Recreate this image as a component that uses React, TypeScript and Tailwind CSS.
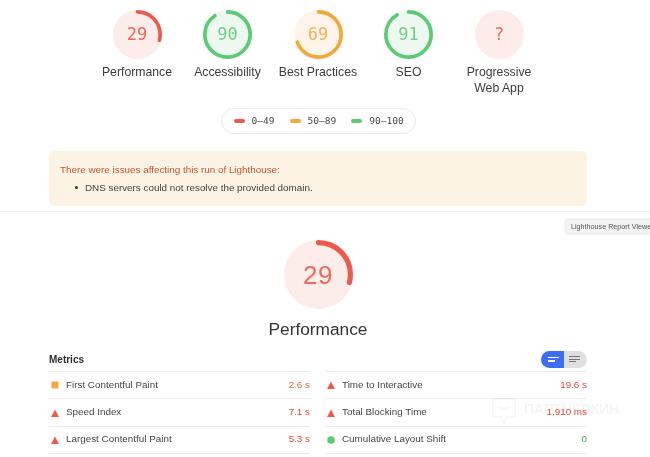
const SANS = "font-['Liberation_Sans',Arial,sans-serif]";
const MONO = "font-['DejaVu_Sans_Mono',monospace]";

type Tone = { stroke: string; bg: string; text: string };
const RED: Tone = { stroke: "#ec5a4c", bg: "#fcecea", text: "#ee6a5e" };
const GREEN: Tone = { stroke: "#5bcb74", bg: "#edf8f0", text: "#72d189" };
const ORANGE: Tone = { stroke: "#f4a83c", bg: "#fef4e9", text: "#f6b159" };

function Gauge({ value, tone, size, label }: { value: number | null; tone: Tone; size: number; label: string }) {
  const r = 55.5;
  const c = 2 * Math.PI * r;
  return (
    <div className="relative shrink-0" style={{ width: size, height: size }}>
      <svg viewBox="0 0 120 120" width={size} height={size} className="block -rotate-90">
        <circle cx="60" cy="60" r="60" fill={tone.bg} />
        {value !== null && (
          <circle
            cx="60"
            cy="60"
            r={r}
            fill="none"
            stroke={tone.stroke}
            strokeWidth="9"
            strokeLinecap="round"
            strokeDasharray={`${(c * value) / 100} ${c}`}
          />
        )}
      </svg>
      <div className="absolute inset-0 flex items-center justify-center" style={{ color: tone.text }}>
        {label}
      </div>
    </div>
  );
}

function Score({ value, tone, name }: { value: number | null; tone: Tone; name: string }) {
  return (
    <div className="w-[90.5px] flex flex-col items-center">
      <div className={`${MONO} text-[17px] leading-none`}>
        <Gauge value={value} tone={tone} size={49} label={value === null ? "?" : String(value)} />
      </div>
      <div className="mt-[5px] w-[86px] text-center text-[12.25px] leading-[16px] text-[#3c3c3c]">{name}</div>
    </div>
  );
}

function Legend({ color, text }: { color: string; text: string }) {
  return (
    <div className="flex items-center gap-[7px]">
      <span className="w-[11px] h-[4px] rounded-full" style={{ background: color }} />
      <span className={`${MONO} text-[9.55px] leading-none text-[#4a4a4a]`}>{text}</span>
    </div>
  );
}

function Icon({ kind }: { kind: "square" | "tri" | "dot" }) {
  return (
    <svg width="8" height="8" viewBox="0 0 8 8" className="shrink-0 block">
      {kind === "square" && <rect x="0.5" y="0.5" width="7" height="7" fill="#f4a83c" />}
      {kind === "tri" && <polygon points="4,0.5 8,8 0,8" fill="#ec5a4c" />}
      {kind === "dot" && <circle cx="4" cy="4" r="3.8" fill="#5bcb74" />}
    </svg>
  );
}

function Metric({ kind, name, value, color }: { kind: "square" | "tri" | "dot"; name: string; value: string; color: string }) {
  return (
    <div className="h-[27.35px] flex items-center border-b border-[#ebebeb] pl-[2px]">
      <Icon kind={kind} />
      <span className="ml-[7px] text-[9.85px] text-[#444444]">{name}</span>
      <span className="ml-auto text-[9.85px]" style={{ color }}>{value}</span>
    </div>
  );
}

export default function App() {
  return (
    <div className={`${SANS} relative w-[650px] h-[457px] overflow-hidden bg-white blur-[0.35px]`}>
      <div className="pl-[49px] pr-[63px]">
        <div className="pt-[10px] flex justify-center items-start h-[108px]">
          <Score value={29} tone={RED} name="Performance" />
          <Score value={90} tone={GREEN} name="Accessibility" />
          <Score value={69} tone={ORANGE} name="Best Practices" />
          <Score value={91} tone={GREEN} name="SEO" />
          <Score value={null} tone={RED} name="Progressive Web App" />
        </div>
        <div className="flex justify-center">
          <div className="w-[195px] h-[26px] rounded-full border border-[#ebebeb] flex items-center pl-[12px] gap-[15px]">
            <Legend color="#ec5a4c" text="0–49" />
            <Legend color="#f4a83c" text="50–89" />
            <Legend color="#5bcb74" text="90–100" />
          </div>
        </div>
        <div className="mt-[17px] h-[55px] rounded-[5px] bg-[#fdf3e5] pl-[11px] pt-[12px]">
          <div className="text-[9.85px] leading-[13px] text-[#c3552f]">There were issues affecting this run of Lighthouse:</div>
          <div className="mt-[5px] ml-[15px] flex items-center text-[9.85px] leading-[13px] text-[#3f3f3f]">
            <span className="w-[3px] h-[3px] rounded-full bg-[#333333] mr-[7px]" />
            DNS servers could not resolve the provided domain.
          </div>
        </div>
      </div>
      <div className="mt-[5px] h-px bg-[#ebebeb]" />
      <div className="pl-[49px] pr-[63px]">
        <div className="mt-[28px] flex flex-col items-center">
          <div className={`${SANS} text-[26px] leading-none tracking-[0.5px]`}>
            <Gauge value={29} tone={RED} size={69} label="29" />
          </div>
          <div className="mt-[9px] text-[17.3px] leading-[22px] text-[#333333]">Performance</div>
        </div>
        <div className="mt-[7px] h-[24px] flex items-center justify-between">
          <span className="text-[10px] font-bold text-[#2f2f2f]">Metrics</span>
          <div className="flex w-[46px] h-[17px] rounded-full overflow-hidden">
            <div className="w-[23px] bg-[#3e6cf2] flex flex-col justify-center items-end pr-[5px] gap-[2px]">
              <span className="w-[11px] h-[1.5px] bg-white" />
              <span className="w-[7px] h-[1.5px] bg-white mr-[4px]" />
            </div>
            <div className="w-[23px] bg-[#dfdfdf] flex flex-col justify-center pl-[5px] gap-[1.5px]">
              <span className="w-[11px] h-px bg-[#777777]" />
              <span className="w-[11px] h-px bg-[#777777]" />
              <span className="w-[7px] h-px bg-[#777777]" />
            </div>
          </div>
        </div>
        <div className="grid grid-cols-[261px_262px] gap-x-[15px]">
          <div className="border-t border-[#ebebeb]">
            <Metric kind="square" name="First Contentful Paint" value="2.6 s" color="#d9683a" />
            <Metric kind="tri" name="Speed Index" value="7.1 s" color="#e5493c" />
            <Metric kind="tri" name="Largest Contentful Paint" value="5.3 s" color="#e5493c" />
          </div>
          <div className="border-t border-[#ebebeb]">
            <Metric kind="tri" name="Time to Interactive" value="19.6 s" color="#e5493c" />
            <Metric kind="tri" name="Total Blocking Time" value="1,910 ms" color="#e5493c" />
            <Metric kind="dot" name="Cumulative Layout Shift" value="0" color="#4f9c62" />
          </div>
        </div>
      </div>
      <div className="absolute left-[566px] top-[220px] h-[13px] w-[100px] bg-[#f3f3f3] shadow-[0_0_3px_rgba(0,0,0,0.2)] pl-[5px] text-[7.2px] leading-[13px] text-[#555555] whitespace-nowrap">
        Lighthouse Report Viewer
      </div>
      <div className="absolute left-[491px] top-[398px] flex items-center gap-[7px] opacity-[0.05] pointer-events-none">
        <svg width="26" height="27" viewBox="0 0 26 27" fill="none" stroke="#555555" strokeWidth="1.5">
          <path d="M2 1h22v18h-8l-3 6-3-6H2z" />
          <path d="M6 9h5M15 9h5M10 11h6" />
        </svg>
        <span className="pb-[5px] text-[14px] font-bold text-[#555555] leading-none whitespace-nowrap">ПАРТНЕРКИН</span>
      </div>
    </div>
  );
}
